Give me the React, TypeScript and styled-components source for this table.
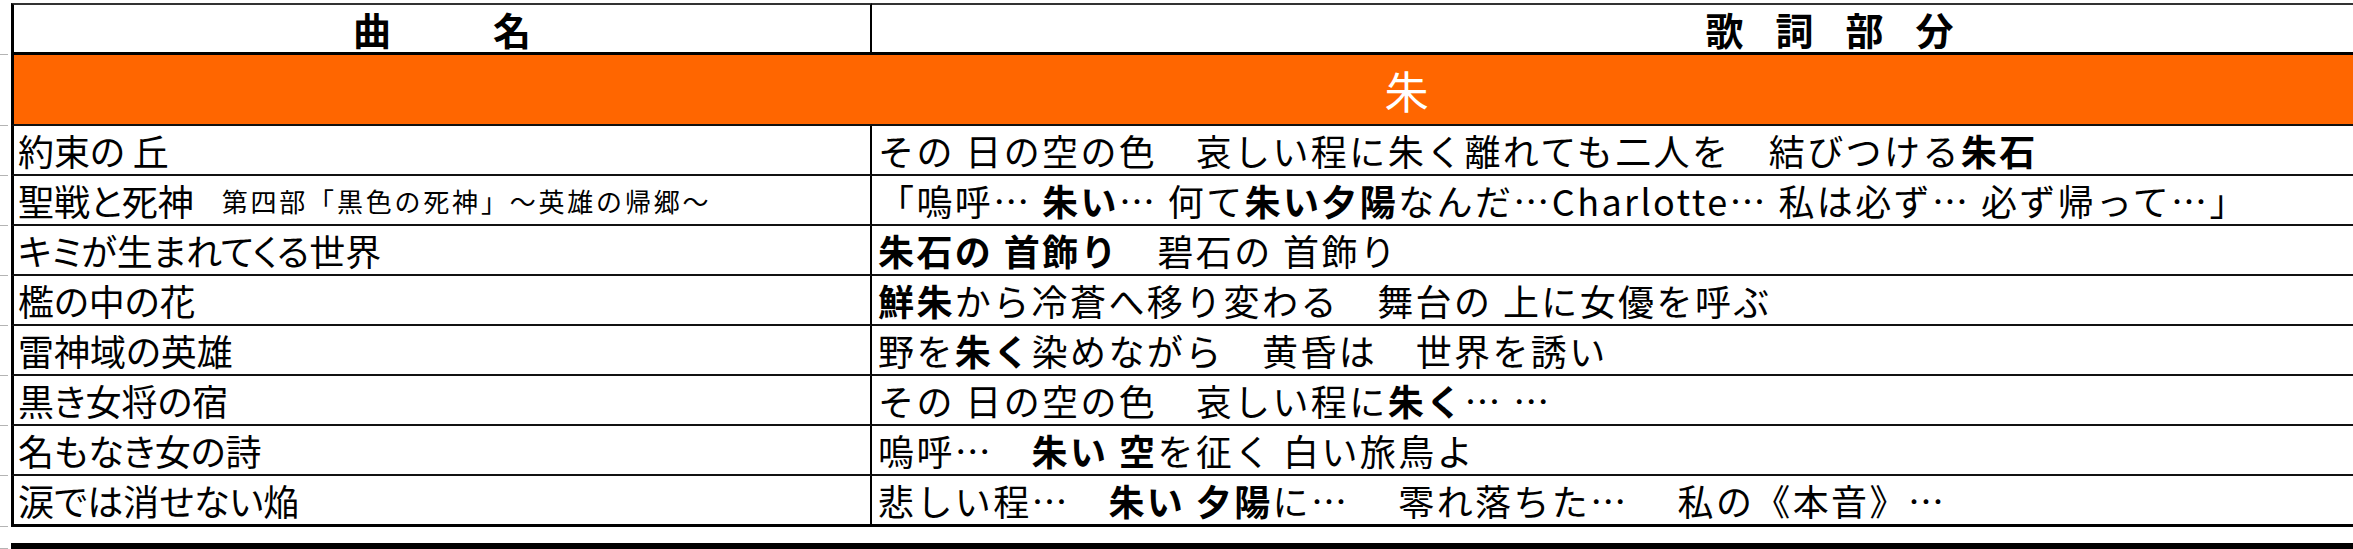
import * as React from 'react';
import styled, { createGlobalStyle } from 'styled-components';

type Segment = [string, ('bold' | 'dots')?];

interface Song {
  title: string;
  sub?: string;
  lyric: Segment[];
}

const songs: Song[] = [
  {
    title: '約束の 丘',
    lyric: [['その 日の空の色　哀しい程に朱く離れても二人を　結びつける'], ['朱石', 'bold']],
  },
  {
    title: '聖戦と死神',
    sub: '第四部「黒色の死神」～英雄の帰郷～',
    lyric: [
      ['「嗚呼… '],
      ['朱い', 'bold'],
      ['… 何て'],
      ['朱い夕陽', 'bold'],
      ['なんだ…Charlotte'],
      ['…', 'dots'],
      [' 私は必ず… 必ず帰って…」'],
    ],
  },
  {
    title: 'キミが生まれてくる世界',
    lyric: [['朱石の 首飾り', 'bold'], ['　碧石の 首飾り']],
  },
  {
    title: '檻の中の花',
    lyric: [['鮮朱', 'bold'], ['から冷蒼へ移り変わる　舞台の 上に女優を呼ぶ']],
  },
  {
    title: '雷神域の英雄',
    lyric: [['野を'], ['朱く', 'bold'], ['染めながら　黄昏は　世界を誘い']],
  },
  {
    title: '黒き女将の宿',
    lyric: [['その 日の空の色　哀しい程に'], ['朱く', 'bold'], ['… …']],
  },
  {
    title: '名もなき女の詩',
    lyric: [['嗚呼…　'], ['朱い 空', 'bold'], ['を征く 白い旅鳥よ']],
  },
  {
    title: '涙では消せない焔',
    lyric: [['悲しい程…　'], ['朱い 夕陽', 'bold'], ['に…　 零れ落ちた…　 私の《本音》…']],
  },
];

const GlobalStyle = createGlobalStyle`
  html, body {
    margin: 0;
    padding: 0;
    background: #fff;
    width: 2353px;
    height: 549px;
    overflow: hidden;
  }
`;

const Sheet = styled.div`
  width: 2353px;
  padding-top: 3px;
  font-family: "Noto Sans CJK JP", "Noto Sans", sans-serif;
  color: #000;
`;

const Row = styled.div<{ $height: number }>`
  display: flex;
  height: ${(p) => p.$height}px;
`;

const Tick = styled.div`
  flex: none;
  width: 8px;
  margin-right: 3px;
  box-sizing: border-box;
  border-bottom: 1px solid #b4b4b4;
`;

const HeadCell = styled.div<{ $first?: boolean }>`
  box-sizing: border-box;
  display: flex;
  align-items: center;
  justify-content: center;
  border-top: 2px solid #333;
  border-bottom: 3px solid #000;
  border-left: ${(p) => (p.$first ? '3px solid #000' : 'none')};
  border-right: ${(p) => (p.$first ? '2px solid #000' : 'none')};
  width: ${(p) => (p.$first ? '861px' : 'auto')};
  flex: ${(p) => (p.$first ? 'none' : '1')};
  padding-left: ${(p) => (p.$first ? '32px' : '466px')};
  font-size: 38px;
  font-weight: 700;
  letter-spacing: 32px;
`;

const Band = styled.div`
  flex: 1;
  box-sizing: border-box;
  display: flex;
  align-items: center;
  justify-content: center;
  padding-left: 446px;
  background: #ff6600;
  border-left: 3px solid #000;
  border-bottom: 2px solid #111;
  color: #fff;
  font-size: 44px;
`;

const NameCell = styled.div<{ $last?: boolean }>`
  flex: none;
  width: 861px;
  box-sizing: border-box;
  display: flex;
  align-items: center;
  padding-left: 4px;
  border-left: 3px solid #000;
  border-right: 2px solid #000;
  border-bottom: ${(p) => (p.$last ? '3px solid #000' : '2px solid #111')};
  font-size: 36px;
  font-feature-settings: "palt";
  white-space: pre;
`;

const Sub = styled.span`
  font-size: 26px;
  letter-spacing: 2.8px;
  margin-left: 28px;
  font-feature-settings: normal;
`;

const LyricCell = styled.div<{ $last?: boolean }>`
  flex: 1;
  box-sizing: border-box;
  display: flex;
  align-items: center;
  padding-left: 6px;
  border-bottom: ${(p) => (p.$last ? '3px solid #000' : '2px solid #111')};
  font-size: 36px;
  letter-spacing: 2.4px;
  white-space: pre;
`;

const Strong = styled.b`
  font-weight: 700;
`;

const Dots = styled.span`
  display: inline-block;
`;

const Footer = styled.div`
  display: flex;
  height: 22px;
`;

const FooterBody = styled.div`
  flex: 1;
  margin-top: 16px;
  background: #000;
`;

const App: React.FC = () => (
  <>
    <GlobalStyle />
    <Sheet>
      <Row $height={52}>
        <Tick />
        <HeadCell $first>曲　名</HeadCell>
        <HeadCell>歌詞部分</HeadCell>
      </Row>
      <Row $height={71}>
        <Tick />
        <Band>朱</Band>
      </Row>
      {songs.map((song, i) => {
        const last = i === songs.length - 1;
        return (
          <Row $height={last ? 51 : 50} key={song.title}>
            <Tick />
            <NameCell $last={last}>
              {song.title}
              {song.sub && <Sub>{song.sub}</Sub>}
            </NameCell>
            <LyricCell $last={last}>
              {song.lyric.map(([text, kind], j) =>
                kind === 'bold' ? (
                  <Strong key={j}>{text}</Strong>
                ) : kind === 'dots' ? (
                  <Dots key={j} lang="ja">{text}</Dots>
                ) : (
                  <span key={j}>{text}</span>
                )
              )}
            </LyricCell>
          </Row>
        );
      })}
      <Footer>
        <Tick />
        <FooterBody />
      </Footer>
    </Sheet>
  </>
);

export default App;
